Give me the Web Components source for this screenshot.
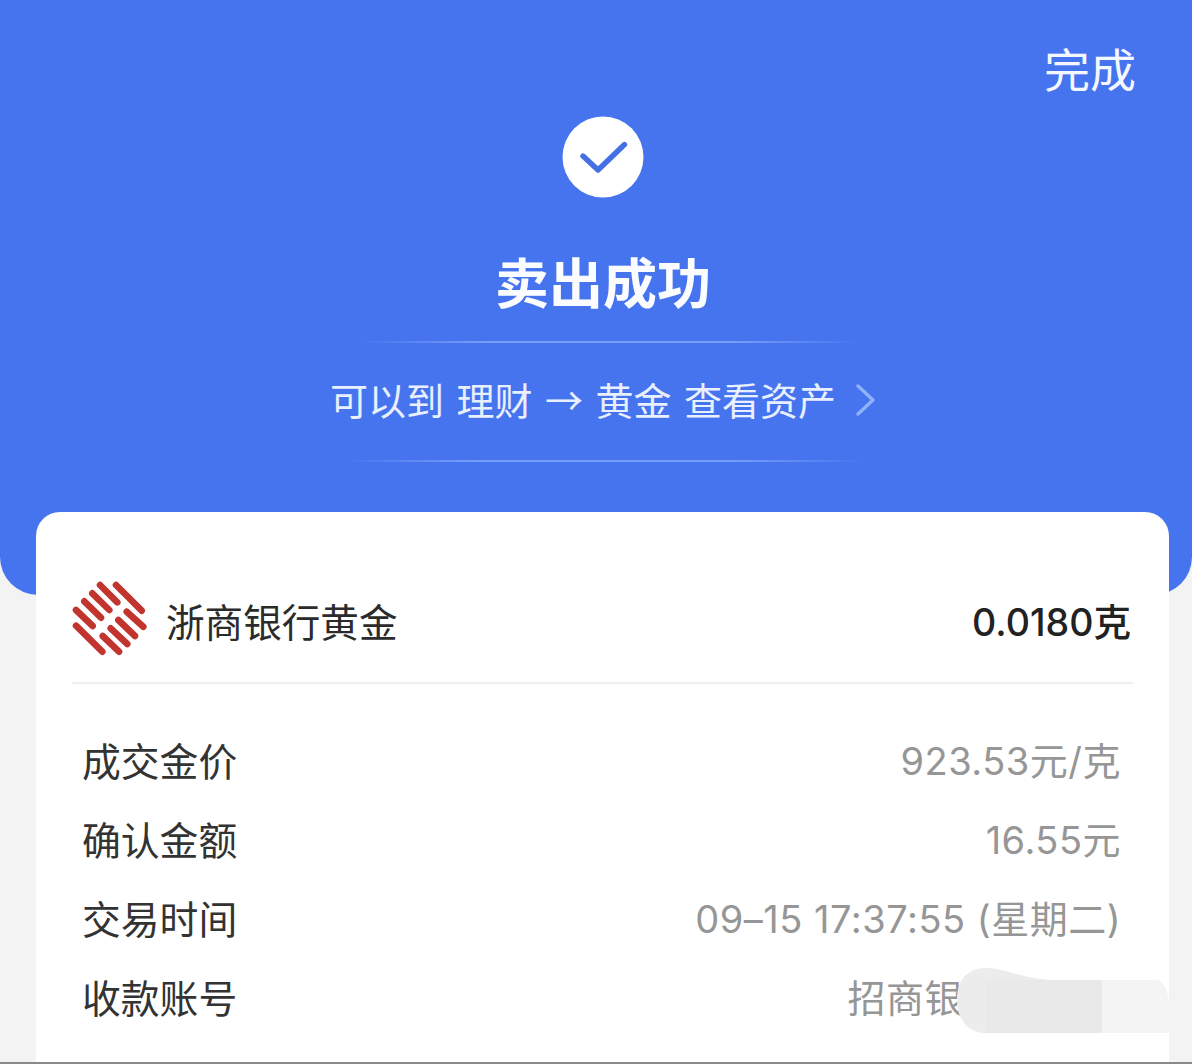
<!DOCTYPE html>
<html lang="zh">
<head>
<meta charset="utf-8">
<title>卖出成功</title>
<style>
  html, body { margin: 0; padding: 0; background: #f3f3f3; }
  body { font-family: "Noto Sans CJK SC", "Noto Sans", sans-serif; overflow: hidden; }
</style>
</head>
<body>
<sell-page>
  <result-header slot="header" done="完成" title="卖出成功">可以到 理财 → 黄金 查看资产</result-header>
  <detail-card slot="card">
    <asset-row slot="head" name="浙商银行黄金" amount="0.0180克"></asset-row>
    <info-row label="成交金价">923.53元/克</info-row>
    <info-row label="确认金额">16.55元</info-row>
    <info-row label="交易时间">09–15 17:37:55 (星期二)</info-row>
    <info-row label="收款账号" style="--value-end: 158px">招商银</info-row>
  </detail-card>
</sell-page>

<script>
(function () {
    const CJK = '"Noto Sans CJK SC", sans-serif';
    const LATIN = 'Inter, "Noto Sans CJK SC", sans-serif';

    class SellPage extends HTMLElement {
        constructor() {
            super();
            this.attachShadow({ mode: "open" }).innerHTML = `
              <style>
                :host { display: flex; flex-direction: column; height: 1064px; overflow: hidden; background: #f3f3f3; }
                .card { display: flex; flex: 1; min-height: 0; margin: -83px 23px 0 36px; position: relative; }
                .edge { height: 2px; background: #8a8a8a; }
              </style>
              <slot name="header"></slot>
              <div class="card"><slot name="card"></slot></div>
              <div class="edge"></div>`;
        }
    }

    class ResultHeader extends HTMLElement {
        connectedCallback() {
            this.attachShadow({ mode: "open" }).innerHTML = `
              <style>
                :host { display: flex; flex-direction: column; align-items: center; box-sizing: border-box; height: 595px; padding-left: 14px;
                        background: #4674ef; border-radius: 0 0 38px 38px; color: #fff; font-family: ${CJK}; }
                .done { align-self: flex-end; margin: 34px 56px 0 0; font-size: 46px; line-height: 66px; font-weight: 400; color: #f4f7ff; }
                .tick { margin-top: 16px; width: 82px; height: 82px; display: block; }
                h1 { margin: 45px 0 0; font-size: 54px; line-height: 76px; font-weight: 700; color: #fbfcff; }
                .rule { height: 2px; background: linear-gradient(90deg, rgba(150,185,255,0), rgba(150,185,255,.6) 25%, rgba(150,185,255,.6) 75%, rgba(150,185,255,0)); }
                .r1 { width: 500px; margin: 22px 0 0 14px; }
                .r2 { width: 520px; margin: 32px 0 0 4px; }
                .link { display: flex; align-items: center; gap: 20px; margin-top: 25px; height: 60px; font-size: 38px; word-spacing: 4px; font-weight: 400; color: #e8efff; white-space: nowrap; }
                svg.more { display: block; margin-top: 3px; }
              </style>
              <div class="done">${this.getAttribute("done")}</div>
              <svg class="tick" viewBox="0 0 82 82">
                <circle cx="41" cy="41" r="40.5" fill="#fff"/>
                <path d="M21 40 L36 54 L62.5 28.5" fill="none" stroke="#4470e4" stroke-width="5.4" stroke-linecap="round" stroke-linejoin="round"/>
              </svg>
              <h1>${this.getAttribute("title")}</h1>
              <div class="rule r1"></div>
              <div class="link"><span><slot></slot></span>
                <svg class="more" width="20" height="34" viewBox="0 0 20 34"><path d="M2 3 L17 17 L2 31" fill="none" stroke="#8fb2fa" stroke-width="3.4" stroke-linecap="round" stroke-linejoin="round"/></svg>
              </div>
              <div class="rule r2"></div>`;
        }
    }

    class DetailCard extends HTMLElement {
        constructor() {
            super();
            this.attachShadow({ mode: "open" }).innerHTML = `
              <style>
                :host { display: block; flex: 1; box-sizing: border-box; padding: 0 36px; background: #fff; border-radius: 24px 24px 0 0; position: relative; overflow: hidden; }
                .head { display: block; border-bottom: 2px solid #efefef; }
                .rows { display: flex; flex-direction: column; padding: 35px 12px 0 10px; }
                /* smudge over the account number */
                .smear { position: absolute; left: 919px; top: 454px; display: block; }
              </style>
              <div class="head"><slot name="head"></slot></div>
              <div class="rows"><slot></slot></div>
              <svg class="smear" width="215" height="70" viewBox="0 0 215 70">
                <clipPath id="blob"><path d="M2 34 C2 12 14 2 32 2 C50 2 70 14 100 14 L200 14 C210 14 214 30 214 40 L214 67 L30 67 C12 67 2 52 2 34Z"/></clipPath>
                <g clip-path="url(#blob)">
                  <rect width="215" height="70" fill="#ececec"/>
                  <rect x="30" y="14" width="117" height="56" fill="#e9e9e9"/>
                  <rect x="147" width="68" height="70" fill="#f4f4f4"/>
                </g>
              </svg>`;
        }
    }

    class AssetRow extends HTMLElement {
        connectedCallback() {
            const bars = [
                [45, 5, 70.7, 30.7], [29, 5, 46.3, 22.3], [21.3, 13.3, 38.3, 30], [13.3, 21.3, 30, 37.7], [5, 30, 21.7, 46],
                [5, 45.7, 31.3, 71.7], [31.7, 56, 48, 71.7], [39.7, 48.3, 56.3, 64], [47.3, 40, 64, 56], [55.7, 31.7, 72.3, 46.7]
            ].map(b => `<line x1="${b[0]}" y1="${b[1]}" x2="${b[2]}" y2="${b[3]}"/>`).join("");
            this.attachShadow({ mode: "open" }).innerHTML = `
              <style>
                :host { display: flex; align-items: center; height: 170px; padding-top: 45px; box-sizing: border-box; font-family: ${CJK}; }
                svg { display: block; flex: none; margin: -3px 0 0 -1px; }
                .name { margin-left: 19px; font-size: 38.6px; font-weight: 400; color: #2b2b2b; }
                .amt { margin: 0 2px 0 auto; font-family: ${LATIN}; font-size: 37.6px; font-weight: 500; color: #222; }
              </style>
              <svg width="76" height="76" viewBox="0 0 76 76" stroke="#c2352f" stroke-width="6.6" stroke-linecap="round">${bars}</svg>
              <span class="name">${this.getAttribute("name")}</span>
              <span class="amt">${this.getAttribute("amount")}</span>`;
        }
    }

    class InfoRow extends HTMLElement {
        connectedCallback() {
            this.attachShadow({ mode: "open" }).innerHTML = `
              <style>
                :host { display: flex; justify-content: space-between; align-items: center; height: 79px; font-size: 38.8px; font-family: ${CJK}; }
                .k { color: #333; }
                .v { color: #969696; font-family: ${LATIN}; font-size: 38px; letter-spacing: .5px; font-weight: 400; white-space: nowrap; padding-right: var(--value-end, 0); }
              </style>
              <span class="k">${this.getAttribute("label")}</span>
              <span class="v"><slot></slot></span>`;
        }
    }

    customElements.define("sell-page", SellPage);
    customElements.define("result-header", ResultHeader);
    customElements.define("detail-card", DetailCard);
    customElements.define("asset-row", AssetRow);
    customElements.define("info-row", InfoRow);
})();
</script>
</body>
</html>
